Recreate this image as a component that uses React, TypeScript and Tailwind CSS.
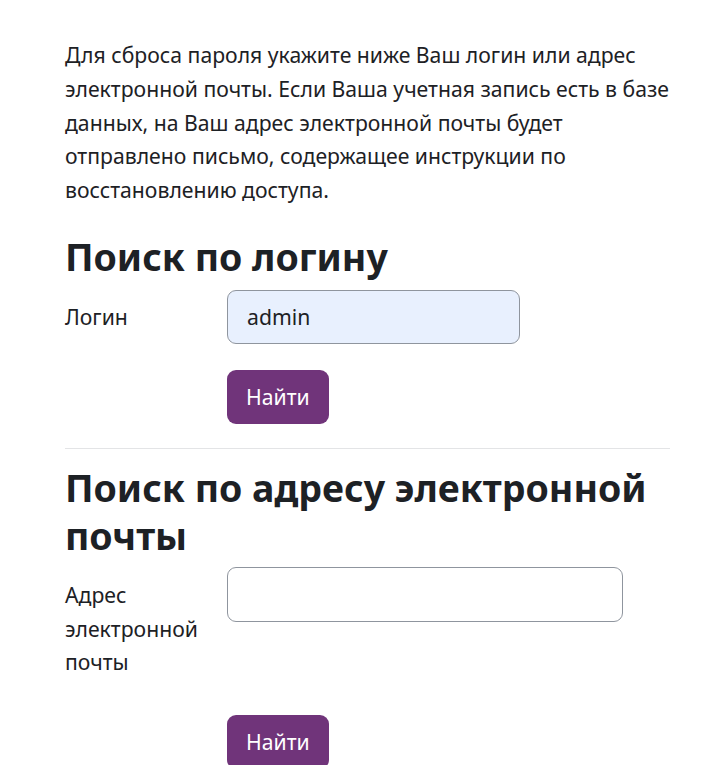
export default function App() {
  return (
    <div
      className="min-h-screen bg-white text-[#1d2125]"
      style={{ fontFamily: '"Noto Sans", "Open Sans", sans-serif' }}
    >
      <div className="w-[605px] pl-[65px] pt-[38px] box-content">
        <p className="mb-[26px] text-[21.2px] leading-[33.75px]">
          Для сброса пароля укажите ниже Ваш логин или адрес
          <br />
          электронной почты. Если Ваша учетная запись есть в базе
          <br />
          данных, на Ваш адрес электронной почты будет
          <br />
          отправлено письмо, содержащее инструкции по
          <br />
          восстановлению доступа.
        </p>

        <h2 className="mb-[9px] text-[37.5px] font-bold leading-[48px]">
          Поиск по логину
        </h2>
        <div className="mb-[26px] flex">
          <label className="w-[162px] pt-[10px] text-[21.2px] leading-[33.75px]">
            Логин
          </label>
          <input
            defaultValue="admin"
            className="h-[54px] w-[293px] rounded-[9px] border border-[#8f959e] bg-[#e8f0fe] px-[19px] text-[21.2px] outline-none"
          />
        </div>
        <div className="flex pl-[162px]">
          <button className="h-[54px] rounded-[9px] bg-[#70347a] px-[19px] text-[21.2px] text-white">
            Найти
          </button>
        </div>

        <hr className="mb-[15px] mt-[24px] border-t border-[#e3e4e6]" />

        <h2 className="mb-[7px] text-[37.5px] font-bold leading-[48px]">
          Поиск по адресу электронной
          <br />
          почты
        </h2>
        <div className="mb-[36px] flex">
          <label className="w-[162px] pt-[11px] text-[21.2px] leading-[33.75px]">
            Адрес
            <br />
            электронной
            <br />
            почты
          </label>
          <input className="h-[55px] w-[396px] rounded-[9px] border border-[#8f959e] bg-white px-[19px] text-[21.2px] outline-none" />
        </div>
        <div className="flex pl-[162px]">
          <button className="h-[54px] rounded-[9px] bg-[#70347a] px-[19px] text-[21.2px] text-white">
            Найти
          </button>
        </div>
      </div>
    </div>
  );
}
